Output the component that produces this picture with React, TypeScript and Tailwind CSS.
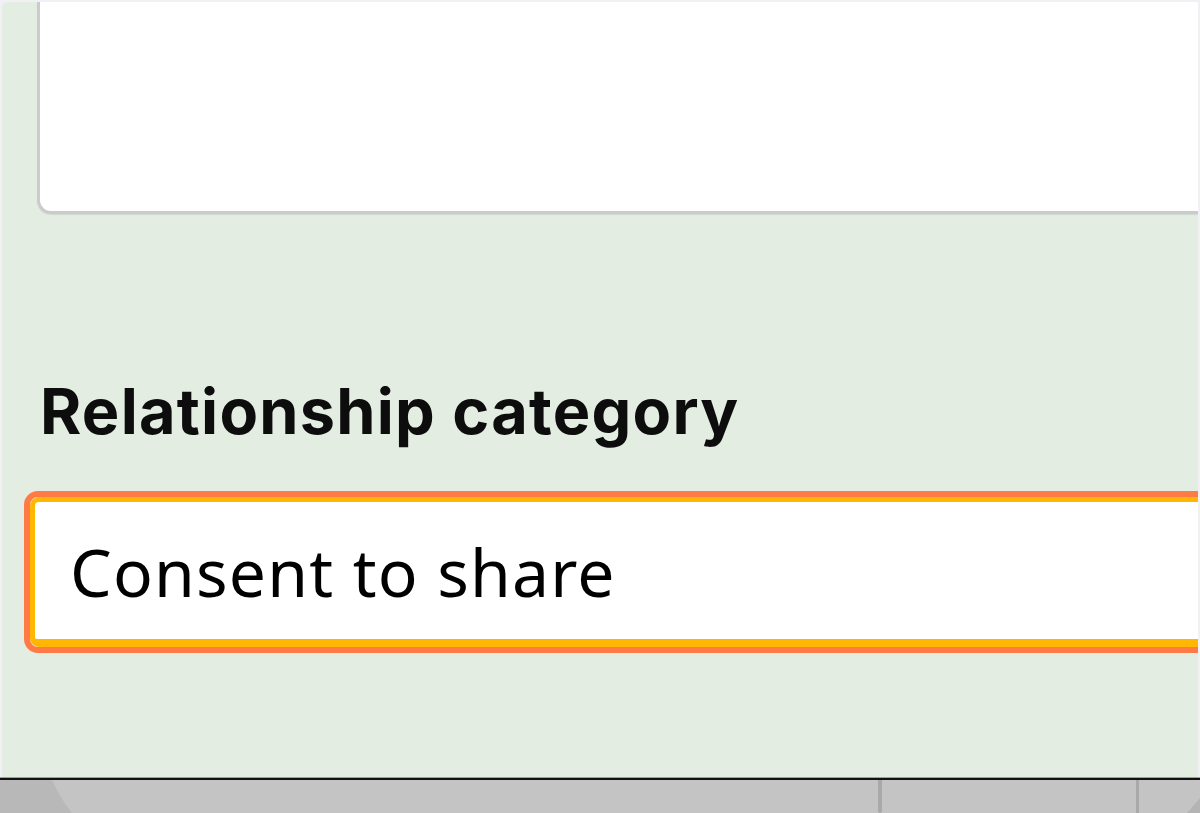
import React from 'react';

const App: React.FC = () => {
  return (
    <div className="w-[1200px] h-[813px] overflow-hidden flex flex-col bg-[#c4c4c4]">
      {/* Form panel */}
      <div className="h-[777px] shrink-0 bg-[#f1f1f5] pt-[2px] pl-[2px] pr-[2px]">
        <div className="h-full bg-[#e3ede2] rounded-tl-[6px] flex flex-col overflow-hidden">
          {/* Notes textarea (scrolled, top cut off) */}
          <div className="ml-[35px] -mr-[20px] h-[212px] shrink-0 bg-white border-[3px] border-t-0 border-r-0 border-[#cbcbcb] rounded-bl-[14px] shadow-[0_1px_1px_rgba(0,0,0,0.08)]" />

          {/* Relationship category */}
          <div className="mt-[166px] ml-[38px] h-[62px] text-[63px] leading-[62px] font-bold text-[#0d0d0d] font-['Inter',sans-serif] tracking-[1.25px]">
            Relationship category
          </div>

          <div className="mt-[49px] ml-[22px] -mr-[30px] h-[162px] shrink-0 border-[6px] border-[#ff7a45] rounded-[14px]">
            <div className="h-full bg-white border-[5px] border-b-[8px] border-[#ffb703] rounded-[9px] flex items-center pl-[35px]">
              <span className="text-[66px] leading-none text-black font-['Noto_Sans',sans-serif] tracking-[1.2px]">Consent to share</span>
            </div>
          </div>
        </div>
      </div>

      {/* Bottom bar */}
      <div className="h-[3px] shrink-0 bg-[#111] border-t border-[#9aa39a]" />
      <div className="flex-1 flex">
        <div className="w-[72px] shrink-0">
          <svg width="72" height="33" viewBox="0 0 72 33" className="block">
            <path d="M0 0 H52 Q60 18 72 33 H0 Z" fill="#b8b8b8" />
          </svg>
        </div>
        <div className="w-[806px] shrink-0" />
        <div className="w-[4px] shrink-0 bg-[#a9a9a9] rounded-b-[2px]" />
        <div className="w-[254px] shrink-0" />
        <div className="w-[3px] shrink-0 bg-[#a9a9a9]" />
        <div className="flex-1">
          <svg width="61" height="33" viewBox="0 0 61 33" className="block">
            <path d="M61 18 L61 33 L48 33 Z" fill="#b4b4b4" />
          </svg>
        </div>
      </div>
    </div>
  );
};

export default App;
